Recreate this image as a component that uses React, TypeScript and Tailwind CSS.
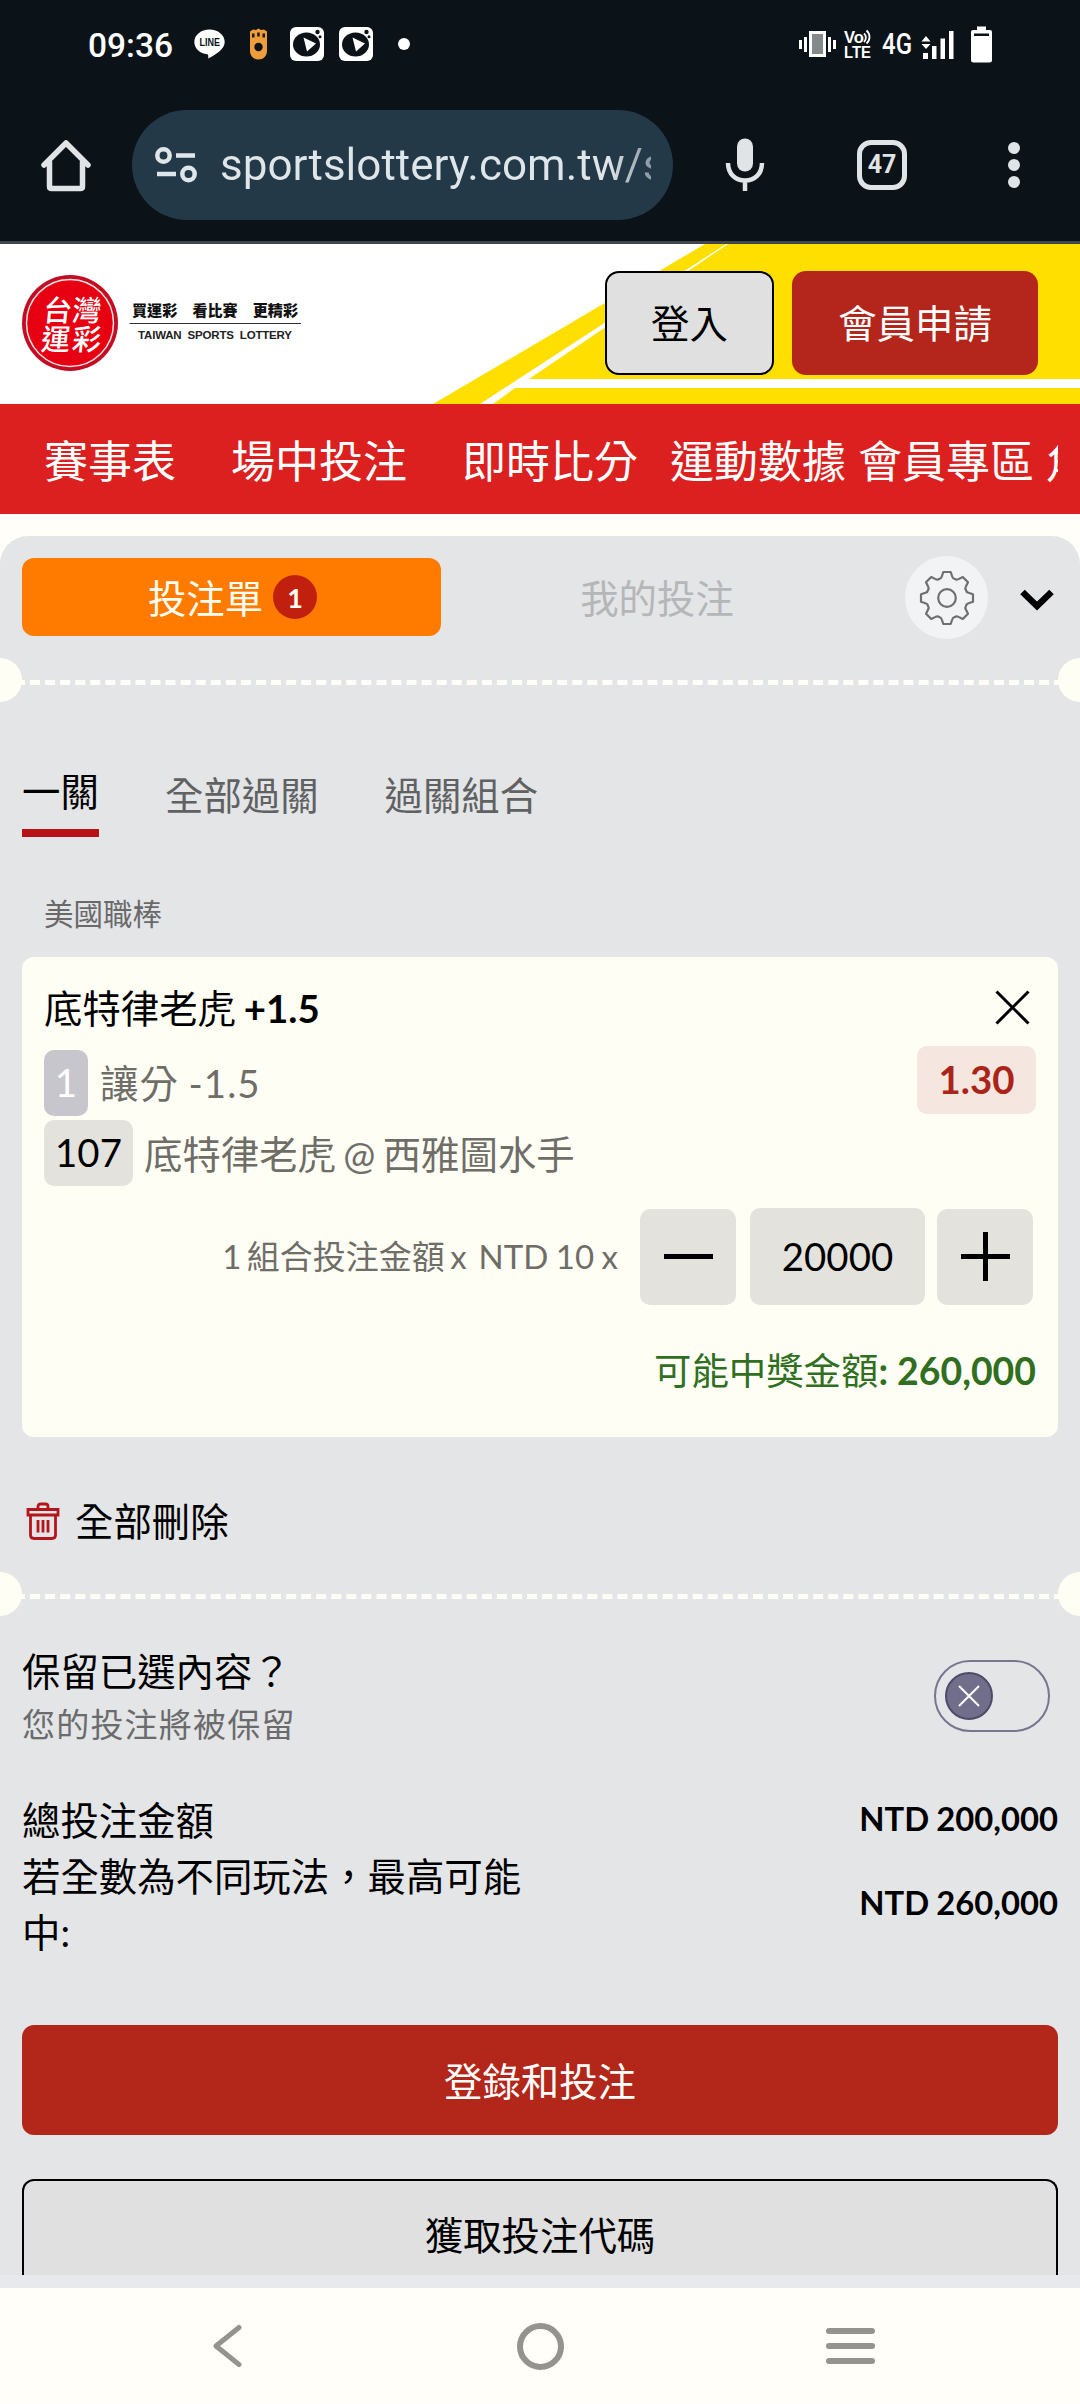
import React from "react";

const navItems = [
  { label: "賽事表", gap: "mr-[55px]" },
  { label: "場中投注", gap: "mr-[55px]" },
  { label: "即時比分", gap: "mr-[32px]" },
  { label: "運動數據", gap: "mr-3" },
  { label: "會員專區", gap: "mr-3" },
  { label: "角", gap: "" },
];

const VideoIcon: React.FC = () => (
  <svg width="34" height="34" viewBox="0 0 34 34">
    <rect width="34" height="34" rx="6" fill="#fff" />
    <ellipse cx="16.5" cy="17.5" rx="13.5" ry="12" fill="#0b1218" />
    <path d="M13.5 10.5 26 16.5 17 24.5Z" fill="#fff" />
    <circle cx="27.5" cy="5" r="2.2" fill="#0b1218" />
    <circle cx="30" cy="9.8" r="1.5" fill="#0b1218" />
  </svg>
);

const StatusBar: React.FC = () => (
  <div className="flex h-[88px] items-center pl-[88px] pr-[88px]">
    <span className="w-[106px] pt-1 font-[Roboto] text-[33.5px] font-medium leading-none text-white">
      09:36
    </span>
    <svg width="31" height="31" viewBox="0 0 31 31">
      <path
        d="M15.5 0.5C7 0.5 0.3 6 0.3 13c0 6.3 5.5 11.4 13 12.3 1.2.3 1.1 1.7.9 4.2C22 25.5 30.7 20 30.7 13 30.7 6 24 0.5 15.5 0.5Z"
        fill="#fff"
      />
      <text
        x="5.5"
        y="17"
        textLength="20.5"
        lengthAdjust="spacingAndGlyphs"
        fontFamily="Liberation Sans"
        fontWeight="bold"
        fontSize="10.5"
        fill="#0b1218"
      >
        LINE
      </text>
    </svg>
    <svg className="ml-6" width="19" height="32" viewBox="0 0 19 32">
      <path
        d="M1 3.5 4 1.5 7 2 9.5 0.5 12 2 15 1.5 18 3.5V23c0 5-4 8.5-8.500 8.500S1 28 1 23Z"
        fill="#ee9c3c"
      />
      <rect x="3" y="5.5" width="2.500" height="4" fill="#1c1a16" />
      <rect x="8.2" y="4.5" width="2.500" height="4" fill="#1c1a16" />
      <rect x="13.5" y="5.5" width="2.500" height="4" fill="#1c1a16" />
      <circle cx="9.5" cy="19" r="4.2" fill="#0b1218" />
    </svg>
    <div className="ml-[22px] flex gap-[15px]">
      <VideoIcon />
      <VideoIcon />
    </div>
    <span className="ml-[25px] h-3 w-3 rounded-full bg-white" />
    <div className="ml-auto flex items-center">
      <svg width="38" height="26" viewBox="0 0 38 26" fill="#fff">
        <rect x="0" y="9" width="3" height="9" />
        <rect x="5" y="6" width="3" height="15" />
        <rect x="11.5" y="1.5" width="14" height="23" fill="#84898c" stroke="#fff" strokeWidth="3" />
        <rect x="29" y="6" width="3" height="15" />
        <rect x="34" y="9" width="3" height="9" />
      </svg>
      <svg className="ml-[7px] overflow-visible" width="28" height="30" viewBox="0 0 28 30" fill="#fff">
        <text x="0" y="13.500" fontFamily="Liberation Sans" fontWeight="bold" fontSize="16" textLength="20" lengthAdjust="spacingAndGlyphs">
          Vo
        </text>
        <path d="M20 4.5c2.5 2 2.5 6 0 8.5M22.5 1.5c4 3.5 4 9.5 0 13" fill="none" stroke="#fff" strokeWidth="1.8" />
        <text x="0" y="29" fontFamily="Liberation Sans" fontWeight="bold" fontSize="17" textLength="27" lengthAdjust="spacingAndGlyphs">
          LTE
        </text>
      </svg>
      <svg className="ml-[11px] overflow-visible" width="29" height="30" viewBox="0 0 29 30" fill="#fff">
        <text x="-1" y="25" fontFamily="Roboto" fontWeight="500" fontSize="30" textLength="30" lengthAdjust="spacingAndGlyphs">
          4G
        </text>
      </svg>
      <svg className="ml-[9px]" width="33" height="29" viewBox="0 0 33 29" fill="#fff">
        <path d="M0.5 11.5 5 6l4.5 5.500ZM0.5 14h9L5 19Z" />
        <rect x="2" y="23" width="5" height="6" />
        <rect x="11" y="16" width="4.5" height="13" />
        <rect x="19.5" y="8.5" width="4.5" height="20.500" />
        <rect x="28" y="1" width="4.5" height="28" />
      </svg>
      <svg className="ml-[17px]" width="21" height="37" viewBox="0 0 21 37">
        <path d="M6 0.5h9V4h4q2 0 2 2v28q0 2.500-2.500 2.500h-16Q0 36.500 0 34V6q0-2 2-2h4Z" fill="#fff" />
        <rect x="3" y="7.5" width="15" height="2.500" fill="#0b1218" />
      </svg>
    </div>
  </div>
);

const BrowserBar: React.FC = () => (
  <div className="flex h-[153px] items-center">
    <svg className="ml-10" width="52" height="54" viewBox="0 0 52 54" fill="none" stroke="#e1e4e7" strokeWidth="5.5" strokeLinejoin="round" strokeLinecap="round">
      <path d="M4 27 26 5 48 27M9.5 24V48.500Q9.500 50.500 11.500 50.500H40.500Q42.500 50.500 42.500 48.500V24" />
    </svg>
    <div className="ml-10 flex h-[110px] w-[541px] items-center rounded-full bg-[#243947] pl-[23px]">
      <svg width="42" height="36" viewBox="0 0 42 36" fill="none" stroke="#dfe6ea" strokeWidth="4.5">
        <circle cx="8.5" cy="8.5" r="6.2" />
        <circle cx="33.5" cy="27" r="6.2" />
        <path d="M21 8.500h19M2 27h19" />
      </svg>
      <span className="ml-[23px] w-[431px] overflow-hidden whitespace-nowrap bg-gradient-to-r from-[#dfe6ea] from-90% to-[#8b99a3] bg-clip-text font-[Roboto] text-[44px] leading-[60px] text-transparent">
        sportslottery.com.tw/s
      </span>
    </div>
    <svg className="ml-[52px]" width="40" height="56" viewBox="0 0 40 56" fill="none" stroke="#e1e4e7" strokeWidth="4.5">
      <rect x="12" y="1.5" width="16" height="33" rx="8" fill="#e1e4e7" stroke="none" />
      <path d="M3 26c0 11 7.500 17.500 17 17.500S37 37 37 26M20 43v11" />
    </svg>
    <div className="ml-[92px] flex h-[50px] w-[50px] items-center justify-center rounded-[14px] border-[5.500px] border-[#e1e4e7] font-[Roboto] text-[25px] font-bold text-[#e1e4e7]">
      47
    </div>
    <div className="ml-[101px] flex flex-col gap-[5px]">
      <span className="h-3 w-3 rounded-full bg-[#e1e4e7]" />
      <span className="h-3 w-3 rounded-full bg-[#e1e4e7]" />
      <span className="h-3 w-3 rounded-full bg-[#e1e4e7]" />
    </div>
  </div>
);

const Logo: React.FC = () => (
  <svg width="284" height="100" viewBox="20 273 284 100">
    <circle cx="70" cy="323" r="48" fill="#c40d23" />
    <circle cx="70" cy="323" r="43.5" fill="#e60012" stroke="#fbe3e3" strokeWidth="1.5" />
    <g fill="#fff" fontFamily="Noto Sans CJK TC" fontWeight="500" fontSize="29" transform="translate(35 0) skewX(-6)">
      <text x="41" y="321">台</text>
      <text x="70" y="321">灣</text>
      <text x="42" y="350">運</text>
      <text x="73" y="350">彩</text>
    </g>
    <text x="132" y="316" fontFamily="Noto Sans CJK TC" fontWeight="900" fontSize="15.1" fill="#111">
      買運彩　看比賽　更精彩
    </text>
    <path d="M129.5 323.500h171.500" stroke="#333" strokeWidth="1.2" />
    <text x="138" y="338.5" fontFamily="Liberation Sans" fontWeight="bold" fontSize="11.5" fill="#222" textLength="154" wordSpacing="3">
      TAIWAN SPORTS LOTTERY
    </text>
  </svg>
);

const SiteHeader: React.FC = () => (
  <header className="relative flex h-40 bg-white pl-5 pr-[42px]">
    <svg className="absolute inset-0" width="1080" height="160" viewBox="0 244 1080 160">
      <path d="M433 404 705 244H1080V404Z" fill="#ffdf00" />
      <path d="M480 404 726 244H728L529 379H1080V388H515L493 404Z" fill="#fff" />
    </svg>
    <div className="relative pt-[29px]">
      <Logo />
    </div>
    <div className="relative ml-auto flex gap-[18px] pt-[27px]">
      <button className="h-[104px] w-[169px] rounded-[14px] border-2 border-black bg-[#e0e0e0] pt-0.5 text-[38.400px] text-black">
        登入
      </button>
      <button className="h-[104px] w-[246px] rounded-[14px] bg-[#b4261b] pt-0.5 text-[38.400px] text-white">
        會員申請
      </button>
    </div>
  </header>
);

// Ticket perforation: half-circle notches joined by a dashed line
const Perforation: React.FC = () => (
  <div className="h-11 shrink-0 overflow-hidden">
    <svg className="block" width="1080" height="44" viewBox="0 0 1080 44">
      <path d="M15 24.500H1065" stroke="#fffef8" strokeWidth="5" strokeDasharray="10 5.060" />
      <circle cx="0" cy="22" r="22" fill="#fffef5" />
      <circle cx="1080" cy="22" r="22" fill="#fffef5" />
    </svg>
  </div>
);

const GearIcon: React.FC = () => {
  const angles = Array.from({ length: 8 }, (_, i) => i * 45);
  return (
    <svg width="58" height="58" viewBox="-29 -29 58 58" fill="none" stroke="#6e6f71" strokeWidth="2.2" strokeLinecap="round" strokeLinejoin="round">
      <circle r="8.8" />
      {angles.map((a) => (
        <path
          key={a}
          transform={`rotate(${a})`}
          d="M-7.9 -19Q-5.900 -19.200 -5.200 -21.500L-3.700 -26H3.700L5.200 -21.500Q5.900 -19.200 7.900 -19"
        />
      ))}
    </svg>
  );
};

const BetCard: React.FC = () => (
  <section className="mx-[22px] mt-[21px] h-[480px] rounded-xl bg-[#fffef5] pl-[22px] pr-[22px]">
    <div className="flex h-[89px] items-center justify-between">
      <h3 className="pt-3 text-[38.400px] leading-[56px] [word-spacing:-2px] text-black">
        底特律老虎 <b>+1.5</b>
      </h3>
      <svg className="mr-1.5 mt-3" width="35" height="35" viewBox="0 0 35 35" stroke="#000" strokeWidth="3">
        <path d="M1.5 1.5 33.5 33.500M33.500 1.500 1.500 33.500" />
      </svg>
    </div>
    <div className="flex items-start justify-between">
      <div className="flex items-center pt-1">
        <span className="flex h-[66px] w-11 items-center justify-center rounded-[10px] bg-[#c7c6cd] text-[38.400px] text-white">
          1
        </span>
        <span className="ml-3 text-[38.400px] leading-[56px] tracking-[1px] text-[#6f6d68] [word-spacing:-1px]">讓分 -1.5</span>
      </div>
      <span className="flex h-[68px] w-[119px] items-center justify-center rounded-[10px] bg-[#f5e7df] text-[38.400px] font-bold text-[#ab241a]">
        1.30
      </span>
    </div>
    <div className="mt-1 flex items-center">
      <span className="flex h-[66px] w-[89px] items-center justify-center rounded-[10px] bg-[#e4e2dd] text-[38.400px] text-black">
        107
      </span>
      <span className="ml-[11px] pt-0.5 text-[38.400px] leading-[56px] text-[#6f6d68] [word-spacing:-2.500px]">
        底特律老虎 @ 西雅圖水手
      </span>
    </div>
    <div className="mr-[3px] mt-[22px] flex items-center justify-end">
      <span className="text-[33px] text-[#6f6d68] [word-spacing:-3px]">1 組合投注金額 x</span>
      <span className="ml-3 mr-[22px] text-[33px] text-[#6f6d68] [word-spacing:-1px]">NTD 10 x</span>
      <button className="flex h-24 w-24 items-center justify-center rounded-[10px] bg-[#e4e2dd]">
        <span className="h-[5px] w-[49px] bg-black" />
      </button>
      <span className="ml-3.5 flex h-[97px] w-[175px] items-center justify-center rounded-[10px] bg-[#e4e2dd] text-[38.400px] text-black">
        20000
      </span>
      <button className="ml-3 flex h-24 w-24 items-center justify-center rounded-[10px] bg-[#e4e2dd]">
        <svg width="49" height="49" viewBox="0 0 49 49" stroke="#000" strokeWidth="5">
          <path d="M0 24.500H49M24.500 0V49" />
        </svg>
      </button>
    </div>
    <p className="mt-[38px] text-right text-[37.400px] leading-[56px] text-[#2f6f1f]">
      可能中獎金額<b>: 260,000</b>
    </p>
  </section>
);

const App: React.FC = () => {
  return (
    <div className="flex h-[2404px] w-[1080px] flex-col overflow-hidden bg-[#fffef8] font-[Lato,'Noto_Sans_CJK_TC',sans-serif]">
      <div className="h-[244px] border-b-[3px] border-[#42474d] bg-[#0b1218]">
        <StatusBar />
        <BrowserBar />
      </div>
      <SiteHeader />
      <nav className="h-[110px] bg-[#dc1f1f] px-[22px]">
        <div className="flex h-full items-center overflow-hidden whitespace-nowrap pl-[22px] pt-1 text-[44px] text-white">
          {navItems.map((item) => (
            <a key={item.label} className={`shrink-0 ${item.gap}`}>
              {item.label}
            </a>
          ))}
        </div>
      </nav>

      <main className="mt-[22px] flex h-[1739px] flex-col overflow-hidden rounded-t-[28px] bg-[#e4e5e7]">
        {/* Slip tabs */}
        <div className="flex h-[122px] shrink-0 items-start pl-[22px]">
          <div className="mt-[22px] flex h-[78px] w-[419px] items-center justify-center rounded-xl bg-[#ff7b00] pl-0.5 text-[38.400px] text-[#fffef5]">
            <span className="pt-1">投注單</span>
            <span className="ml-2.5 flex h-11 w-11 items-center justify-center rounded-full bg-[#c1200f] pt-0.5 text-[27px] font-bold">
              1
            </span>
          </div>
          <div className="mt-[22px] flex h-[78px] w-[432px] items-center justify-center pt-1 text-[38.400px] text-[#b5b6b8]">
            我的投注
          </div>
          <div className="ml-8 mt-5 flex h-[83px] w-[83px] items-center justify-center rounded-full bg-[#f2f3f5]">
            <GearIcon />
          </div>
          <svg className="ml-8 mt-[53px]" width="34" height="22" viewBox="0 0 34 22" fill="none" stroke="#000" strokeWidth="6.5">
            <path d="M2.5 3 17 17 31.500 3" />
          </svg>
        </div>
        <Perforation />

        {/* Bet type tabs */}
        <div className="mt-[63px] flex h-[72px] shrink-0 pl-[22px] text-[38.400px] text-[#606162]">
          <div className="h-[72px] w-[77px] border-b-8 border-[#b81219] leading-[52px] text-black">一關</div>
          <div className="ml-[66px] leading-[60px]">全部過關</div>
          <div className="ml-[66px] leading-[60px]">過關組合</div>
        </div>

        <p className="mt-[55px] h-[44px] pl-11 text-[29.500px] leading-[44px] text-[#69696a]">美國職棒</p>
        <BetCard />

        {/* Clear all */}
        <div className="mt-[56px] flex h-14 shrink-0 items-center pl-[26px]">
          <svg width="34" height="38" viewBox="0 0 34 38" fill="none" stroke="#b3161b" strokeWidth="2.8">
            <path d="M2 7.500h30v5.500H2ZM12 7V4.500q0-2.500 2.500-2.500h5q2.500 0 2.500 2.500v2.500M4.500 13v20q0 3.500 3.500 3.500h18q3.500 0 3.500-3.500V13M12 18v12.500M17 18v12.500M22 18v12.500" />
          </svg>
          <span className="ml-[15px] text-[38.400px] leading-[56px] text-black">全部刪除</span>
        </div>
        <div className="h-[23px] shrink-0" />
        <Perforation />

        <div className="flex shrink-0 items-start justify-between px-[22px]">
          <div className="pt-[27px]">
            <p className="text-[38.400px] leading-[56px] text-black">保留已選內容？</p>
            <p className="text-[33px] leading-[50px] tracking-[1.200px] text-[#6a6b6c]">您的投注將被保留</p>
          </div>
          <div className="mr-2 mt-11 flex h-[72px] w-[116px] items-center rounded-full border-2 border-[#77758f] pl-[9px]">
            <span className="flex h-12 w-12 items-center justify-center rounded-full border-2 border-[#4d4b68] bg-[#706e8b]">
              <svg width="22" height="22" viewBox="0 0 22 22" stroke="#fff" strokeWidth="2">
                <path d="M1 1 21 21M21 1 1 21" />
              </svg>
            </span>
          </div>
        </div>

        {/* Totals */}
        <div className="mt-[43px] flex shrink-0 justify-between px-[22px] text-[38.400px] leading-[56px] text-black">
          <span>總投注金額</span>
          <b className="text-[32.800px] leading-[53px] [word-spacing:-1px]">NTD 200,000</b>
        </div>
        <div className="flex shrink-0 justify-between px-[22px] text-[38.400px] leading-[56px] text-black">
          <span className="w-[500px]">若全數為不同玩法，最高可能中:</span>
          <b className="pt-7 text-[32.800px] leading-[53px] [word-spacing:-1px]">NTD 260,000</b>
        </div>

        {/* Actions */}
        <button className="mx-[22px] mt-[65px] h-[110px] shrink-0 rounded-xl bg-[#b3261a] pt-[3px] text-[38.400px] text-white">
          登錄和投注
        </button>
        <div className="mx-[22px] mt-11 h-24 shrink-0 rounded-t-xl border-2 border-b-0 border-black bg-[#e0e0e0] pt-[26px] text-center text-[38.400px] leading-[56px] text-black">
          獲取投注代碼
        </div>
      </main>
      <div className="h-[13px] bg-[#e8e9ed]" />

      {/* System navigation */}
      <footer className="flex flex-1 items-center bg-[#fffef8]">
        <svg className="ml-[212px]" width="31" height="44" viewBox="0 0 31 44" fill="none" stroke="#94938d" strokeWidth="5" strokeLinecap="round" strokeLinejoin="round">
          <path d="M27 3.500 4 22 27 40.500" />
        </svg>
        <span className="ml-[274px] h-[47px] w-[47px] rounded-full border-[6px] border-[#94938d]" />
        <div className="ml-[262px] flex flex-col gap-[9px]">
          <span className="h-1.5 w-[49px] rounded-sm bg-[#94938d]" />
          <span className="h-1.5 w-[49px] rounded-sm bg-[#94938d]" />
          <span className="h-1.5 w-[49px] rounded-sm bg-[#94938d]" />
        </div>
      </footer>
    </div>
  );
};

export default App;
